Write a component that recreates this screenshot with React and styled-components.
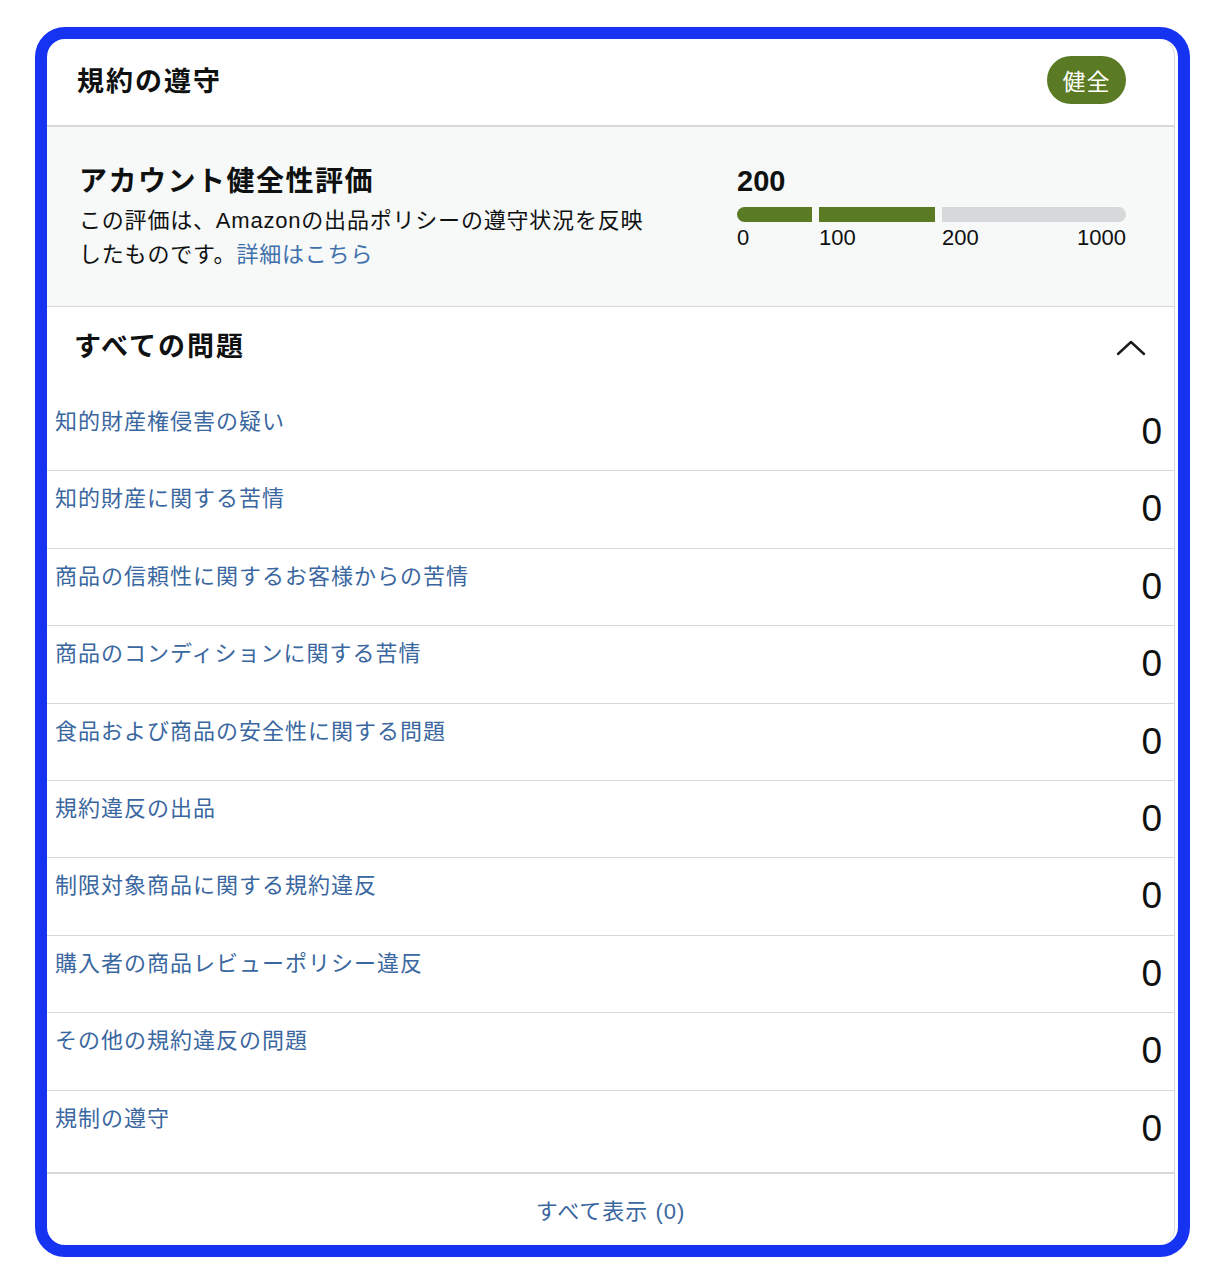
import React from "react";
import styled, { createGlobalStyle } from "styled-components";

const GlobalStyle = createGlobalStyle`
	body {
		margin: 0;
		background: #ffffff;
		font-family: "Liberation Sans", "Noto Sans CJK JP", Arial, sans-serif;
		color: #0f1111;
	}
`;

const Frame = styled.div`
	box-sizing: border-box;
	width: 1155px;
	margin: 27px 0 0 35px;
	border: 12px solid #1733f2;
	border-radius: 30px;
	background: #ffffff;
	overflow: hidden;
`;

const Card = styled.div`
	margin-right: 3px;
	border-right: 1px solid #d5d9d9;
	border-radius: 0 17px 17px 0;
	overflow: hidden;
`;

const Header = styled.div`
	display: flex;
	align-items: center;
	justify-content: space-between;
	height: 86px;
	padding: 0 48px 0 30px;
	border-bottom: 2px solid #d5d9d9;
`;

const Title = styled.h2`
	margin: 0;
	font-size: ${(p) => p.size || 27}px;
	letter-spacing: ${(p) => p.spacing || 2}px;
	font-weight: 700;
	line-height: 1.2;
`;

const Badge = styled.span`
	display: inline-flex;
	align-items: center;
	justify-content: center;
	width: 79px;
	height: 48px;
	border-radius: 24px;
	background: #5a7b23;
	color: #ffffff;
	font-size: 23px;
	letter-spacing: 1px;
	margin-top: -4px;
`;

const Score = styled.div`
	box-sizing: border-box;
	display: flex;
	height: 180px;
	padding: 38px 48px 0 32px;
	background: #f7f8f8;
	border-bottom: 1px solid #d5d9d9;
`;

const ScoreInfo = styled.div`
	flex: 0 0 658px;
`;

const Description = styled.p`
	margin: 5px 0 0;
	font-size: 22px;
	letter-spacing: 0.8px;
	line-height: 34px;
	color: #0f1111;
`;

const Link = styled.a`
	color: #3f72ad;
	text-decoration: none;
`;

const Meter = styled.div`
	flex: 1;
`;

const ScoreValue = styled.div`
	font-size: 29px;
	font-weight: 700;
	line-height: 32px;
`;

const Track = styled.div`
	display: grid;
	grid-template-columns: 75px 116px 1fr;
	column-gap: 7px;
`;

const Bar = styled.div`
	height: 15px;
	margin-top: 10px;
	background: ${(p) => (p.filled ? "#5a7b23" : "#d5d9d9")};
	border-radius: ${(p) => p.radius || "0"};
`;

const Ticks = styled.div`
	display: flex;
	justify-content: space-between;
	font-size: 22px;
	line-height: 28px;
	margin-top: 2px;
`;

const IssuesHead = styled.div`
	display: flex;
	align-items: center;
	justify-content: space-between;
	height: 87px;
	padding: 0 28px 0 27px;
	box-sizing: border-box;
	padding-bottom: 6px;
`;

const Row = styled.div`
	box-sizing: border-box;
	display: flex;
	justify-content: space-between;
	align-items: flex-start;
	height: ${(p) => (p.last ? 83 : 77.4)}px;
	padding: 13px 12px 0 8px;
	border-bottom: ${(p) => (p.last ? "2px" : "1px")} solid #d5d9d9;
`;

const IssueLink = styled.a`
	font-size: 22px;
	letter-spacing: 1px;
	line-height: 30px;
	color: #3a67a0;
	text-decoration: none;
`;

const Count = styled.span`
	font-size: 37px;
	line-height: 40px;
	margin-top: 5px;
	color: #0f1111;
`;

const Footer = styled.div`
	display: flex;
	align-items: center;
	justify-content: center;
	height: 71px;
	font-size: 22px;
	letter-spacing: 1px;
	color: #3a67a0;
`;

const issues = [
	"知的財産権侵害の疑い",
	"知的財産に関する苦情",
	"商品の信頼性に関するお客様からの苦情",
	"商品のコンディションに関する苦情",
	"食品および商品の安全性に関する問題",
	"規約違反の出品",
	"制限対象商品に関する規約違反",
	"購入者の商品レビューポリシー違反",
	"その他の規約違反の問題",
	"規制の遵守",
];

const Chevron = () => (
	<svg width="30" height="18" viewBox="0 0 30 18" fill="none">
		<polyline points="2,15 15,3 28,15" stroke="#1b1b1b" strokeWidth="2.4" strokeLinecap="round" strokeLinejoin="round" />
	</svg>
);

const App = () => {
	return (
		<>
			<GlobalStyle />
			<Frame>
				<Card>
					<Header>
						<Title>規約の遵守</Title>
						<Badge>健全</Badge>
					</Header>
					<Score>
						<ScoreInfo>
							<Title size={28} spacing={1.5}>アカウント健全性評価</Title>
							<Description>
								この評価は、Amazonの出品ポリシーの遵守状況を反映
								<br />
								したものです。<Link href="#">詳細はこちら</Link>
							</Description>
						</ScoreInfo>
						<Meter>
							<ScoreValue>200</ScoreValue>
							<Track>
								<Bar filled radius="8px 0 0 8px" />
								<Bar filled />
								<Bar radius="0 8px 8px 0" />
								<Ticks><span>0</span></Ticks>
								<Ticks><span>100</span></Ticks>
								<Ticks><span>200</span><span>1000</span></Ticks>
							</Track>
						</Meter>
					</Score>
					<IssuesHead>
						<Title>すべての問題</Title>
						<Chevron />
					</IssuesHead>
					{issues.map((name, i) => (
						<Row key={name} last={i === issues.length - 1}>
							<IssueLink href="#">{name}</IssueLink>
							<Count>0</Count>
						</Row>
					))}
					<Footer>すべて表示 (0)</Footer>
				</Card>
			</Frame>
		</>
	);
};

export default App;
